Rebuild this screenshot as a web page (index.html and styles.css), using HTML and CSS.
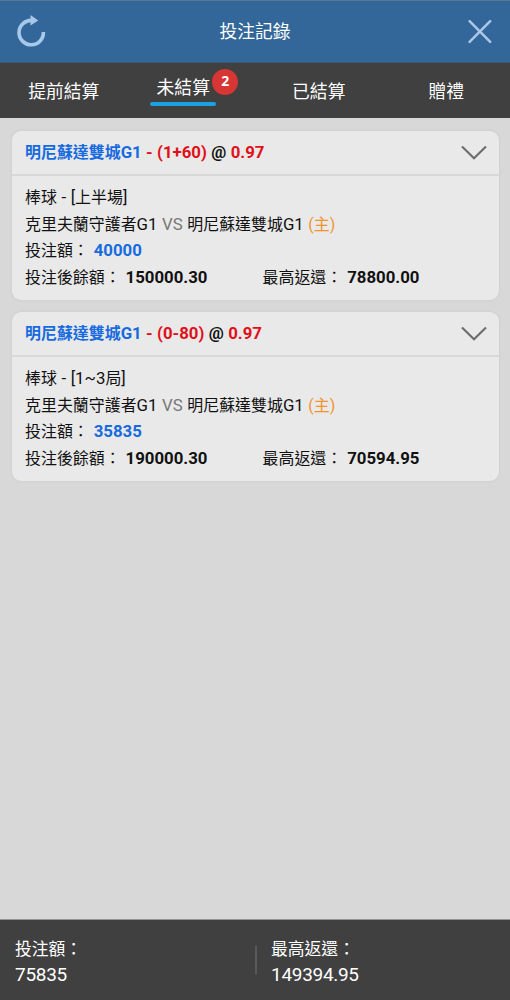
FILE: index.html
```html
<!DOCTYPE html>
<html lang="zh-Hant">
<head>
<meta charset="utf-8">
<title>投注記錄</title>
<link rel="stylesheet" href="styles.css">
</head>
<body>
<div class="app">
  <header class="topbar">
    <svg class="refresh" viewBox="0 0 34 36" width="34" height="36"><path d="M18 6.4A12.2 12.2 0 1 0 29.4 18" fill="none" stroke="#a6c8ea" stroke-width="3.6"/><path d="M16.5 1L24.3 6.4L16.5 11.4Z" fill="#a6c8ea"/></svg>
    <h1 class="title">投注記錄</h1>
    <svg class="close" viewBox="0 0 24 24" width="24" height="24"><path d="M1.6 1.2L22.2 21.8M22.2 1.2L1.6 21.8" fill="none" stroke="#a9c8e8" stroke-width="2.5" stroke-linecap="round"/></svg>
  </header>
  <nav class="tabs">
    <div class="tab">提前結算</div>
    <div class="tab tab-active"><span class="tab-label">未結算<span class="badge">2</span></span></div>
    <div class="tab">已結算</div>
    <div class="tab">贈禮</div>
  </nav>
  <main class="bets">
    <section class="card">
      <div class="card-head">
        <div class="pick"><span class="team">明尼蘇達雙城<span class="latin">G1</span></span><span class="latin"> <span class="odds">- (1+60)</span> @ <span class="odds">0.97</span></span></div>
        <svg class="chevron" viewBox="0 0 26 15" width="26" height="15"><path d="M1 1.5L13 13.3L25 1.5" fill="none" stroke="#6c6c6c" stroke-width="2.1"/></svg>
      </div>
      <div class="card-body">
        <div>棒球<span class="latin"> - [</span>上半場<span class="latin">]</span></div>
        <div>克里夫蘭守護者<span class="latin">G1 <span class="versus">VS</span> </span>明尼蘇達雙城<span class="latin">G1 </span><span class="home">(主)</span></div>
        <div>投注額： <b class="latin stake">40000</b></div>
        <div class="amounts"><span>投注後餘額： <b class="latin">150000.30</b></span><span>最高返還： <b class="latin">78800.00</b></span></div>
      </div>
    </section>
    <section class="card">
      <div class="card-head">
        <div class="pick"><span class="team">明尼蘇達雙城<span class="latin">G1</span></span><span class="latin"> <span class="odds">- (0-80)</span> @ <span class="odds">0.97</span></span></div>
        <svg class="chevron" viewBox="0 0 26 15" width="26" height="15"><path d="M1 1.5L13 13.3L25 1.5" fill="none" stroke="#6c6c6c" stroke-width="2.1"/></svg>
      </div>
      <div class="card-body">
        <div>棒球<span class="latin"> - [1~3</span>局<span class="latin">]</span></div>
        <div>克里夫蘭守護者<span class="latin">G1 <span class="versus">VS</span> </span>明尼蘇達雙城<span class="latin">G1 </span><span class="home">(主)</span></div>
        <div>投注額： <b class="latin stake">35835</b></div>
        <div class="amounts"><span>投注後餘額： <b class="latin">190000.30</b></span><span>最高返還： <b class="latin">70594.95</b></span></div>
      </div>
    </section>
  </main>
  <footer class="summary">
    <div class="total"><div class="total-label">投注額：</div><div class="total-value">75835</div></div>
    <div class="divider"></div>
    <div class="total"><div class="total-label">最高返還：</div><div class="total-value">149394.95</div></div>
  </footer>
</div>
</body>
</html>
```

FILE: styles.css
```css
* { box-sizing: border-box; }
body {
  margin: 0;
  font-family: Roboto, "Noto Sans CJK TC", sans-serif;
  color: #111;
}
.app {
  display: flex;
  flex-direction: column;
  height: 1000px;
  background: #d8d8d8;
}
.topbar {
  flex: none;
  display: grid;
  grid-template-columns: 34px 1fr 24px;
  align-items: center;
  height: 63px;
  padding: 0 18px 0 14px;
  background: #336799;
  border-top: 1px solid #5b7a99;
  border-bottom: 1px solid #3d5872;
}
.title {
  margin: 0;
  padding: 0 6px 3px 0;
  text-align: center;
  font-size: 17.8px;
  font-weight: 400;
  color: #fff;
}
.tabs {
  flex: none;
  display: grid;
  grid-template-columns: repeat(4, 1fr);
  height: 55px;
  background: #404040;
  color: #fff;
  font-size: 17.8px;
  line-height: 26px;
}
.tab {
  padding-top: 16px;
  text-align: center;
}
.tab-active { padding: 12px 16px 0 0; }
.tab-label {
  display: inline-block;
  position: relative;
  width: 66px;
}
.tab-label::after {
  content: "";
  display: block;
  height: 4px;
  margin-top: 1px;
  border-radius: 2px;
  background: #1ba1e2;
}
.badge {
  position: absolute;
  left: 62px;
  top: -6px;
  width: 26px;
  height: 26px;
  border-radius: 50%;
  background: #d83535;
  font-family: "Open Sans", sans-serif;
  font-size: 14px;
  font-weight: 700;
  line-height: 24px;
}
.bets {
  flex: 1;
  display: flex;
  flex-direction: column;
  gap: 12px;
  padding: 13px 11px 0 12px;
}
.card {
  height: 169px;
  border-radius: 9px;
  background: #e9e9e9;
  box-shadow: 0 0 3px #c8c8c8;
  font-size: 15.95px;
}
.latin { font-size: 16.8px; }
.card-head {
  display: flex;
  align-items: center;
  justify-content: space-between;
  height: 45px;
  padding: 0 12px 0 13px;
  border-bottom: 2px solid #d8d8d8;
}
.pick {
  padding-bottom: 4px;
  font-weight: 700;
  word-spacing: 0.2px;
}
.team { color: #176bdf; }
.odds { color: #e01018; }
.card-body {
  padding: 8px 13px 0;
  line-height: 26.5px;
  word-spacing: 0.4px;
}
.card-body > div { height: 26.5px; }
.card-body b { margin-left: 0.6px; }
.versus { color: #777; }
.home { color: #f2932c; }
.card-body .stake { color: #176bdf; }
.amounts {
  display: grid;
  grid-template-columns: 237.5px 1fr;
}
.summary {
  flex: none;
  display: grid;
  grid-template-columns: 240px 2px 1fr;
  align-items: center;
  height: 81px;
  padding: 4px 0 0 15px;
  border-top: 1px solid #929292;
  background: #404040;
  color: #fff;
}
.divider {
  height: 28px;
  width: 2px;
  margin-top: -4px;
  background: #5a5a5a;
}
.divider + .total { padding-left: 14px; }
.total-label {
  font-size: 16.8px;
  line-height: 25px;
}
.total-value {
  font-size: 19px;
  letter-spacing: -0.3px;
  line-height: 25px;
}
```
